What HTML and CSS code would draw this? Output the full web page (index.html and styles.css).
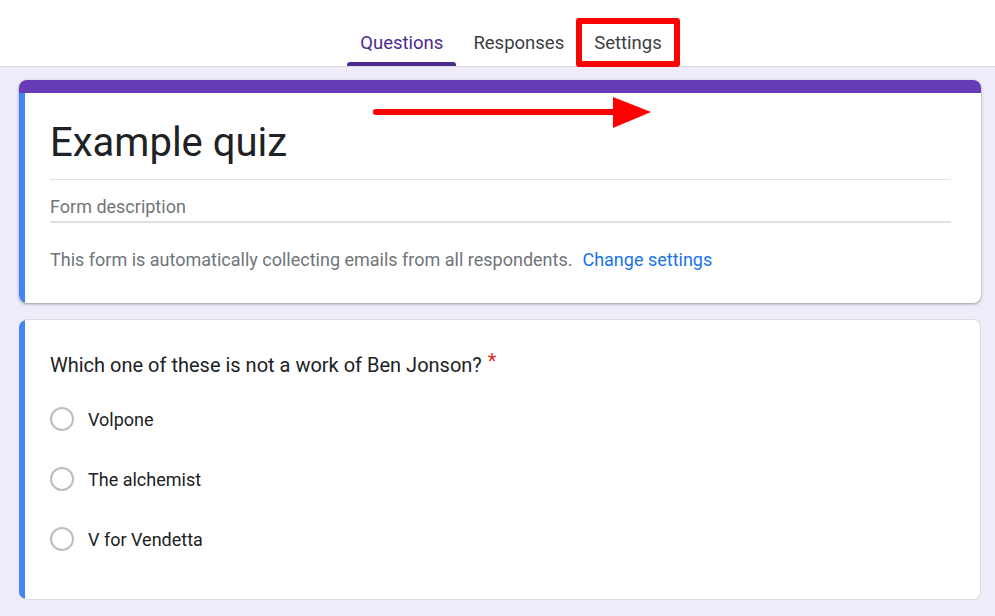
FILE: index.html
```html
<!DOCTYPE html>
<html lang="en">
<head>
  <meta charset="UTF-8" />
  <title>Example quiz - Google Forms</title>
  <link rel="stylesheet" href="styles.css">
</head>
<body>

  <header class="topbar">
    <nav class="tabs">
      <a class="tab active">Questions</a>
      <a class="tab">Responses</a>
      <a class="tab">Settings</a>
    </nav>
  </header>

  <!-- annotations drawn over the page -->
  <div class="mark-box"></div>
  <svg class="mark-arrow" width="290" height="40" viewBox="0 0 290 40">
    <line x1="9" y1="17" x2="248" y2="17" stroke="#ff0000" stroke-width="6" stroke-linecap="round" />
    <polygon points="246,2 284,17 246,33" fill="#ff0000" />
  </svg>

  <main class="form">
    <section class="card head-card">
      <div class="card-body">
        <h1 class="title">Example quiz</h1>
        <div class="desc">Form description</div>
        <p class="notice">This form is automatically collecting emails from all respondents.<a class="link">Change settings</a></p>
      </div>
    </section>

    <section class="card question-card">
      <div class="card-body">
        <div class="question">Which one of these is not a work of Ben Jonson?<span class="req">*</span></div>
        <ul class="options">
          <li class="option"><span class="radio"></span>Volpone</li>
          <li class="option"><span class="radio"></span>The alchemist</li>
          <li class="option"><span class="radio"></span>V for Vendetta</li>
        </ul>
      </div>
    </section>

    <section class="card next-card"></section>
  </main>

</body>
</html>
```

FILE: styles.css
```css
* { margin: 0; padding: 0; box-sizing: border-box; }
body {
  font-family: Roboto, "Liberation Sans", sans-serif;
  background: #f0ebf8;
  color: #202124;
  height: 616px;
  overflow: hidden;
  position: relative;
}

/* --- Top tabs --- */
.topbar {
  background: #fff;
  height: 67px;
  border-bottom: 1px solid #dadce0;
  display: flex;
  justify-content: center;
  align-items: flex-end;
}

.tabs {
  display: flex;
  gap: 4px;
  margin-left: 27px;
}

.tab {
  height: 66px;
  padding: 20px 13px 0;
  display: flex;
  align-items: center;
  font-size: 18.5px;
  font-weight: 400;
  color: #3c4043;
  position: relative;
  cursor: pointer;
}

.tab.active {
  color: #4c2a92;
}

.tab.active::after {
  content: "";
  position: absolute;
  left: 0;
  right: 0;
  bottom: 0;
  height: 4px;
  background: #4c2a92;
  border-radius: 3px 3px 0 0;
}

/* --- Red annotations --- */
.mark-box {
  position: absolute;
  left: 576px;
  top: 18px;
  width: 104px;
  height: 49px;
  border: 6px solid #ff0000;
  border-radius: 3px;
  z-index: 10;
}

.mark-arrow {
  position: absolute;
  left: 367px;
  top: 95px;
  z-index: 10;
}

/* --- Form cards --- */
.form {
  padding: 13px 14px 0 19px;
  display: flex;
  flex-direction: column;
  gap: 16px;
}

.card {
  background: #fff;
  border: 1px solid #dadce0;
  border-radius: 8px;
  overflow: hidden;
}

.head-card {
  border: none;
  border-top: 13px solid #673ab7;
  box-shadow: 0 1px 2px rgba(60,64,67,0.3), 0 1px 3px 1px rgba(60,64,67,0.15);
}

.card-body {
  border-left: 6px solid #4285f4;
  padding: 0 30px 0 25px;
}

.head-card .card-body {
  padding-top: 26px;
  padding-bottom: 31px;
}

.title {
  font-size: 40px;
  font-weight: 400;
  line-height: 48px;
  padding-bottom: 12px;
  border-bottom: 1px solid #e0e0e0;
}

.desc {
  font-size: 18px;
  line-height: 24px;
  color: #70757a;
  padding-top: 15px;
  padding-bottom: 2px;
  border-bottom: 2px solid #e0e0e0;
}

.notice {
  margin-top: 25px;
  font-size: 18px;
  line-height: 24px;
  color: #70757a;
}

.link {
  color: #1a73e8;
  margin-left: 10px;
  cursor: pointer;
}

.question-card {
  border-left: none;
}

.question-card .card-body {
  padding-top: 29px;
  padding-bottom: 30px;
}

.question {
  font-size: 20px;
  line-height: 24px;
}

.req {
  color: #d93025;
  margin-left: 6px;
  vertical-align: 4px;
}

.options {
  list-style: none;
  margin-top: 12px;
}

.option {
  height: 60px;
  display: flex;
  align-items: center;
  gap: 14px;
  font-size: 18px;
}

.radio {
  width: 24px;
  height: 24px;
  border: 2px solid #bdbdbd;
  border-radius: 50%;
}

.next-card {
  height: 40px;
}
```
